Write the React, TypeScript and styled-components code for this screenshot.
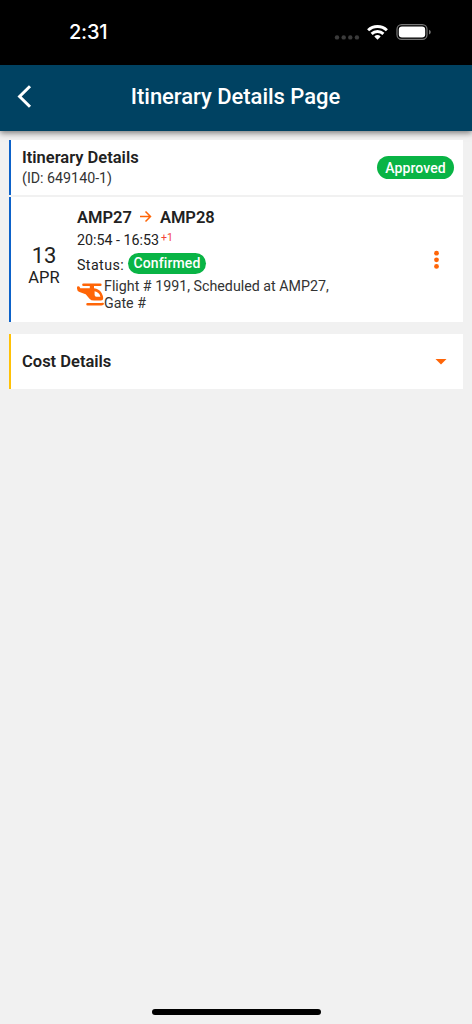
import React from "react";
import styled, { createGlobalStyle } from "styled-components";

const ORANGE = "#ff6507";
const GREEN = "#09b445";
const BLUE = "#0d62c9";

const GlobalStyle = createGlobalStyle`
  * { box-sizing: border-box; }
  body { margin: 0; background: #f1f1f1; font-family: Roboto, sans-serif; color: #212121; }
  svg { display: block; flex: none; }
`;

const Screen = styled.div`
  display: flex;
  flex-direction: column;
  width: 472px;
  height: 1024px;
  overflow: hidden;
  background: #f1f1f1;
`;

const StatusBar = styled.div`
  display: flex;
  justify-content: space-between;
  height: 65px;
  padding: 20px 41px 0 69px;
  background: #000;
  color: #fff;
`;

const Clock = styled.div`
  font: 500 20px/25px Inter, sans-serif;
  letter-spacing: -0.2px;
`;

const Header = styled.header`
  display: grid;
  grid-template-columns: 60px 1fr 60px;
  align-items: center;
  height: 66px;
  flex: none;
  background: #004262;
  color: #fff;
  box-shadow: 0 2px 6px rgba(0, 0, 0, 0.5);
`;

const BackButton = styled.button`
  padding: 0 0 2px 17px;
  border: 0;
  background: none;
  color: inherit;
`;

const Title = styled.h1`
  margin: 0;
  padding: 0 1px 2px 0;
  text-align: center;
  font-size: 22px;
  line-height: 28px;
  font-weight: 500;
  letter-spacing: -0.03px;
`;

const Content = styled.main`
  display: flex;
  flex-direction: column;
  flex: 1;
  padding: 9px 9px 0;
`;

const Card = styled.section<{ $accent: string; $height: number; $gap?: number }>`
  display: flex;
  height: ${(p) => p.$height}px;
  margin-bottom: ${(p) => p.$gap ?? 0}px;
  border-left: 2px solid ${(p) => p.$accent};
  background: #fff;
`;

const CardBar = styled.div`
  display: flex;
  flex: 1;
  align-items: center;
  justify-content: space-between;
  padding: 0 9px 0 11px;
`;

const CardTitle = styled.h2`
  margin: 0;
  font-size: 16.5px;
  line-height: 20px;
  font-weight: 600;
`;

const Heading = styled.div`
  padding-top: 1px;
`;

const Reference = styled.div`
  font-size: 14.25px;
  line-height: 20px;
  color: #333;
`;

const Badge = styled.span<{ $height: number; $width: number }>`
  display: flex;
  align-items: center;
  justify-content: center;
  width: ${(p) => p.$width}px;
  height: ${(p) => p.$height}px;
  border-radius: 12px;
  background: ${GREEN};
  color: #fff;
  font-size: 14px;
  font-weight: 500;
  letter-spacing: 0.12px;
`;

const DateColumn = styled.div`
  width: 66px;
  padding-top: 47px;
  text-align: center;
`;

const Day = styled.div`
  font-size: 22px;
  line-height: 24px;
`;

const Month = styled.div`
  font-size: 16.5px;
  line-height: 20px;
`;

const Details = styled.div`
  flex: 1;
  padding-top: 9px;
`;

const Route = styled.div`
  display: flex;
  align-items: center;
  gap: 7.5px;
  height: 23px;
  font-size: 16.5px;
  font-weight: 600;
`;

const Times = styled.div`
  display: flex;
  height: 24px;
  font-size: 14.25px;
  line-height: 23px;
`;

const DayOffset = styled.span`
  margin-left: 2px;
  font-size: 10.5px;
  line-height: 17px;
  color: #f44336;
`;

const StatusLine = styled.div`
  display: flex;
  gap: 4px;
  height: 25px;
  font-size: 14.25px;
  line-height: 25px;
  letter-spacing: 0.4px;
`;

const Flight = styled.div`
  display: flex;
  font-size: 14.25px;
  line-height: 16.5px;
  color: #333;

  > svg {
    margin-top: 5px;
  }
`;

const Actions = styled.div`
  display: flex;
  align-items: center;
  padding-right: 23px;
`;

const HomeIndicator = styled.div`
  align-self: center;
  width: 169px;
  height: 6px;
  margin-bottom: 9px;
  border-radius: 3px;
  background: #000;
`;

const SystemIcons = () => (
  <svg width="97" height="24" viewBox="334 20 97 24">
    <g fill="#3b3b3b">
      {[337, 343.7, 350.3, 356.9].map((x) => (
        <circle key={x} cx={x} cy="37.4" r="2.2" />
      ))}
    </g>
    <g fill="none" stroke="#fff" strokeWidth="2.9">
      <path d="M368.1 30.2a13.6 13.6 0 0 1 18.8 0" />
      <path d="M371.6 33.9a8.5 8.5 0 0 1 11.8 0" />
    </g>
    <path d="M374.3 36.5a4.7 4.7 0 0 1 6.4 0l-3.2 3.2z" fill="#fff" />
    <rect x="397" y="24.6" width="30" height="14.8" rx="4.7" fill="none" stroke="#777" strokeWidth="1.2" />
    <rect x="398.8" y="26.5" width="26.4" height="11" rx="3.2" fill="#fff" />
    <path d="M429 29.7q1.8.7 1.8 2.4T429 34.5z" fill="#777" />
  </svg>
);

const BackIcon = () => (
  <svg width="16" height="24" viewBox="0 0 16 24" fill="none" stroke="currentColor" strokeWidth="3">
    <path d="M13 1.2 2.6 11.5 13 21.8" />
  </svg>
);

const ArrowIcon = () => (
  <svg width="13" height="15" viewBox="0 0 13 15" fill="none" stroke={ORANGE} strokeWidth="1.5">
    <path d="M1 6.500h10.2M6.500 1.500l5 5-5 5" />
  </svg>
);

const HelicopterIcon = () => (
  <svg width="27" height="24" viewBox="0 0 27 24" fill={ORANGE}>
    <path
      fillRule="evenodd"
      d="M6.500 .4H23.300a1.250 1.250 0 0 1 0 2.700H17V5.200Q22 5.600 24.600 10 26.200 13 26.200 15.300 26.200 17.600 24 17.600H17Q14 17.600 12.500 15.700L8.700 11.300 2.500 9Q0 8 0 5.500V4.600Q0 3.300 1.200 3.300 2.500 3.300 2.800 4.300L3.300 5.200H12.800V3.100H6.500a1.250 1.250 0 0 1 0-2.700zM17.600 8.200V11.800Q17.600 13.700 19.400 13.700H23.400Q22.600 9.300 17.600 8.200z"
    />
    <path d="M10.500 20H24.100L25.600 19.800Q26.900 19.700 27 20.700 27 22.500 24.300 22.500H10.500a1.200 1.200 0 0 1 0-2.500z" />
  </svg>
);

const MoreIcon = () => (
  <svg width="7" height="20" viewBox="0 0 7 20" fill={ORANGE}>
    {[3.2, 9.8, 16.4].map((y) => (
      <circle key={y} cx="3.5" cy={y} r="2.4" />
    ))}
  </svg>
);

const CaretIcon = () => (
  <svg width="12" height="7" viewBox="0 0 12 7" fill={ORANGE}>
    <path d="M.5 1h11L6 6.500z" />
  </svg>
);

const CaretSlot = styled.div`
  padding-right: 7px;
`;

export default function App() {
  return (
    <Screen>
      <GlobalStyle />
      <StatusBar>
        <Clock>2:31</Clock>
        <SystemIcons />
      </StatusBar>
      <Header>
        <BackButton aria-label="Back">
          <BackIcon />
        </BackButton>
        <Title>Itinerary Details Page</Title>
      </Header>
      <Content>
        <Card $accent={BLUE} $height={55} $gap={2}>
          <CardBar>
            <Heading>
              <CardTitle>Itinerary Details</CardTitle>
              <Reference>(ID: 649140-1)</Reference>
            </Heading>
            <Badge $width={77} $height={23}>Approved</Badge>
          </CardBar>
        </Card>
        <Card $accent={BLUE} $height={125} $gap={12}>
          <DateColumn>
            <Day>13</Day>
            <Month>APR</Month>
          </DateColumn>
          <Details>
            <Route>
              <span>AMP27</span>
              <ArrowIcon />
              <span>AMP28</span>
            </Route>
            <Times>
              20:54 - 16:53<DayOffset>+1</DayOffset>
            </Times>
            <StatusLine>
              Status: <Badge $width={78} $height={21}>Confirmed</Badge>
            </StatusLine>
            <Flight>
              <HelicopterIcon />
              <div>
                Flight # 1991, Scheduled at AMP27,
                <br />
                Gate #
              </div>
            </Flight>
          </Details>
          <Actions>
            <MoreIcon />
          </Actions>
        </Card>
        <Card $accent="#ffc107" $height={55}>
          <CardBar>
            <CardTitle>Cost Details</CardTitle>
            <CaretSlot>
              <CaretIcon />
            </CaretSlot>
          </CardBar>
        </Card>
      </Content>
      <HomeIndicator />
    </Screen>
  );
}
